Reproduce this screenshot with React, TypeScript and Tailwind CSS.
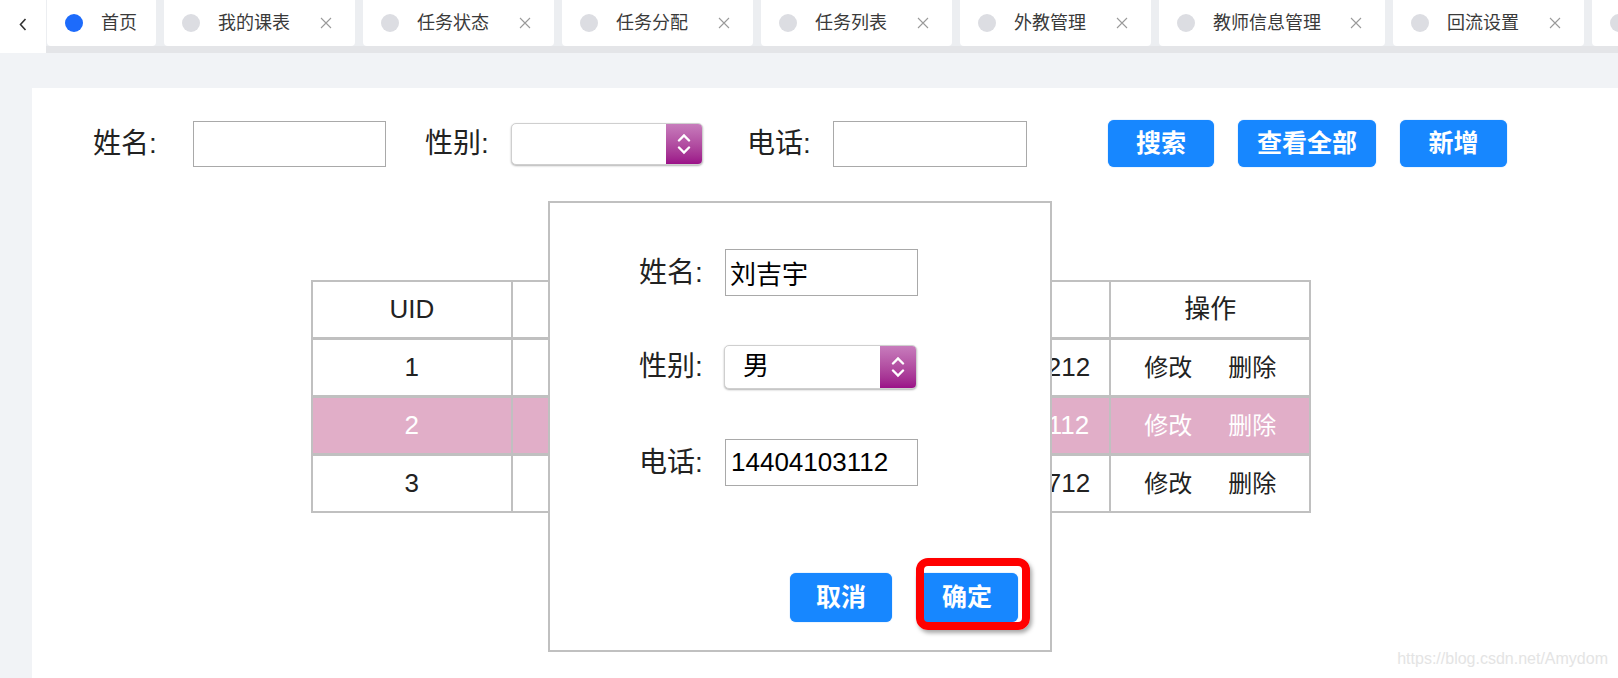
import React from "react";

const tabs = [
  { title: "首页", active: true, w: "w-[109px]" },
  { title: "我的课表", w: "w-[191px]" },
  { title: "任务状态", w: "w-[191px]" },
  { title: "任务分配", w: "w-[191px]" },
  { title: "任务列表", w: "w-[191px]" },
  { title: "外教管理", w: "w-[191px]" },
  { title: "教师信息管理", w: "w-[226px]" },
  { title: "回流设置", w: "w-[191px]" },
  { title: "系统设置", w: "w-[191px]" },
];

const users = [
  { uid: 1, name: "王小明", sex: "女", phone: "14404103212" },
  { uid: 2, name: "刘吉宇", sex: "男", phone: "14404103112", selected: true },
  { uid: 3, name: "陈思远", sex: "男", phone: "14404103712" },
];

const CloseIcon = () => (
  <svg width="12" height="12" viewBox="0 0 12 12" className="text-[#9a9a9a]">
    <path d="M1 1L11 11M11 1L1 11" stroke="currentColor" strokeWidth="1.1" fill="none" />
  </svg>
);

const Stepper = () => (
  <div className="flex w-[36px] flex-col items-center justify-center gap-[4px] bg-gradient-to-b from-[#c77cbc] to-[#9b0f88]">
    <svg width="14" height="9" viewBox="0 0 14 9">
      <path d="M2 7.5L7 2.5L12 7.5" stroke="white" strokeWidth="2.4" fill="none" strokeLinecap="round" />
    </svg>
    <svg width="14" height="9" viewBox="0 0 14 9">
      <path d="M2 1.5L7 6.5L12 1.5" stroke="white" strokeWidth="2.4" fill="none" strokeLinecap="round" />
    </svg>
  </div>
);

const Select = ({ value, className }: { value?: string; className: string }) => (
  <div
    className={`flex overflow-hidden rounded-[5px] border border-[#cfcfcf] bg-white shadow-[0_1px_2px_rgba(0,0,0,0.3)] ${className}`}
  >
    <span className="flex flex-1 items-center pl-[18px] text-[26px] text-black">{value}</span>
    <Stepper />
  </div>
);

const BlueButton = ({ label, className }: { label: string; className: string }) => (
  <button
    type="button"
    className={`flex items-center justify-center rounded-[6px] bg-[#1787ff] text-[25px] font-bold text-white shadow-[0_0_1px_rgba(23,135,255,0.8)] ${className}`}
  >
    {label}
  </button>
);

const App: React.FC = () => {
  return (
    <div className="relative h-[678px] w-[1618px] overflow-hidden bg-[#f1f3f6] font-['Liberation_Sans','Noto_Sans_CJK_SC',sans-serif] text-[#222]">
      {/* tab bar */}
      <div className="flex h-[53px]">
        <div className="flex w-[46px] justify-center bg-white pt-[18px]">
          <svg width="8" height="13" viewBox="0 0 8 13">
            <path d="M6.5 1L1.5 6.5L6.5 12" stroke="#333" strokeWidth="1.6" fill="none" />
          </svg>
        </div>
        <div className="flex flex-1 gap-[8px] overflow-hidden border-b-[7px] border-[#e4e5e8] bg-[#eceef1] pl-[1px]">
          {tabs.map((t) => (
            <div
              key={t.title}
              className={`flex h-[46px] shrink-0 items-center rounded-b-[4px] bg-white pl-[18px] ${t.w}`}
            >
              <span
                className={`h-[18px] w-[18px] shrink-0 rounded-full ${t.active ? "bg-[#1d6bfb]" : "bg-[#dcdde2]"}`}
              />
              <span className="ml-[18px] whitespace-nowrap text-[18px] text-[#3a3a3a]">{t.title}</span>
              {!t.active && (
                <span className="ml-auto mr-[23px] flex">
                  <CloseIcon />
                </span>
              )}
            </div>
          ))}
        </div>
      </div>

      {/* content card */}
      <div className="pl-[32px] pt-[35px]">
        <div className="relative h-[590px] bg-white pl-[61px] pt-[32px]">
          <div className="flex h-[47px] items-center">
            <span className="w-[100px] text-[28px]">姓名:</span>
            <input className="h-[46px] w-[193px] border border-[#a9a9a9] outline-none" />
            <span className="ml-[39px] w-[86px] text-[28px]">性别:</span>
            <Select className="h-[42px] w-[192px]" />
            <span className="ml-[44px] w-[86px] text-[28px]">电话:</span>
            <input className="h-[46px] w-[194px] border border-[#a9a9a9] outline-none" />
            <BlueButton label="搜索" className="ml-[81px] h-[47px] w-[106px]" />
            <BlueButton label="查看全部" className="ml-[24px] h-[47px] w-[138px]" />
            <BlueButton label="新增" className="ml-[24px] h-[47px] w-[107px]" />
          </div>

          {/* table */}
          <div className="ml-[218px] mt-[113px] grid w-[1000px] grid-cols-5 gap-x-[2px] gap-y-[3px] bg-[#c0c0c0] p-[2px] text-[26px]">
            {["UID", "姓名", "性别", "电话", "操作"].map((h) => (
              <div key={h} className="flex h-[55px] items-center justify-center bg-white">
                {h}
              </div>
            ))}
            {users.map((u) => {
              const cell = `flex h-[55px] items-center justify-center ${
                u.selected ? "bg-[#e1aec8] text-white" : "bg-white"
              }`;
              return (
                <React.Fragment key={u.uid}>
                  <div className={cell}>{u.uid}</div>
                  <div className={cell}>{u.name}</div>
                  <div className={cell}>{u.sex}</div>
                  <div className={cell}>{u.phone}</div>
                  <div className={`${cell} gap-[36px] text-[24px]`}>
                    <span>修改</span>
                    <span>删除</span>
                  </div>
                </React.Fragment>
              );
            })}
          </div>

          {/* edit dialog */}
          <div className="absolute left-[516px] top-[113px] flex h-[451px] w-[504px] flex-col border-2 border-[#c0c0c0] bg-white pl-[89px] pt-[46px]">
            <div className="flex h-[47px] items-center">
              <span className="w-[86px] text-[28px]">姓名:</span>
              <input
                defaultValue="刘吉宇"
                className="h-[47px] w-[193px] border border-[#a9a9a9] px-[4px] text-[26px] text-black outline-none"
              />
            </div>
            <div className="mt-[47px] flex h-[47px] items-center">
              <span className="w-[85px] text-[28px]">性别:</span>
              <Select value="男" className="h-[44px] w-[193px]" />
            </div>
            <div className="mt-[49px] flex h-[47px] items-center">
              <span className="w-[86px] text-[28px]">电话:</span>
              <input
                defaultValue="14404103112"
                className="h-[47px] w-[193px] border border-[#a9a9a9] px-[5px] text-[26px] text-black outline-none"
              />
            </div>
            <div className="mt-[87px] flex justify-end gap-[24px] pr-[32px]">
              <BlueButton label="取消" className="h-[49px] w-[102px]" />
              <BlueButton label="确定" className="h-[49px] w-[102px]" />
            </div>
            <div className="absolute left-[366px] top-[355px] h-[72px] w-[114px] rounded-[12px] border-[8px] border-[#ff0000] shadow-[2px_3px_4px_rgba(0,0,0,0.35)]" />
          </div>
        </div>
      </div>

      <span className="absolute bottom-[7px] right-[10px] text-[16px] text-[#e4e4e4]">
        https://blog.csdn.net/Amydom
      </span>
    </div>
  );
};

export default App;
